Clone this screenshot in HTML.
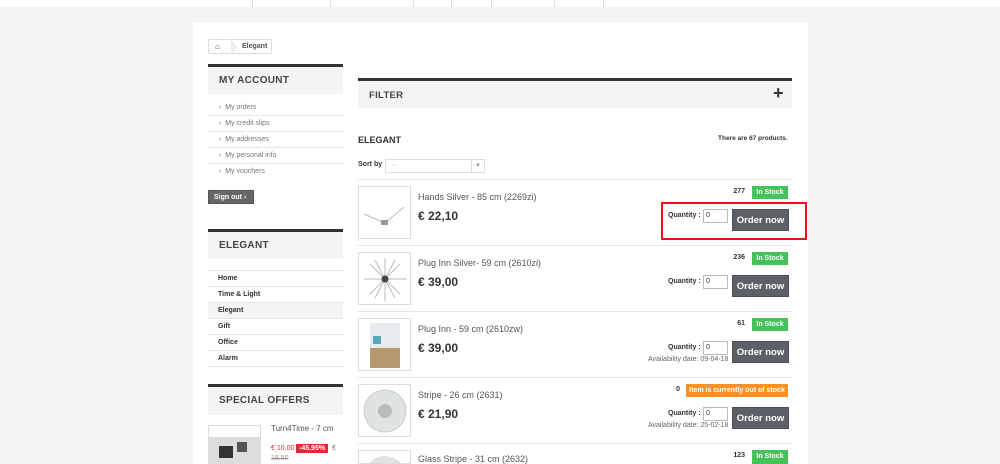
<!DOCTYPE html>
<html style="width:1000px;height:464px;overflow:hidden"><head><meta charset="utf-8"><style>
*{margin:0;padding:0;box-sizing:border-box}
body{width:1000px;height:464px;overflow:hidden;background:#f4f4f4;font-family:"Liberation Sans",Arial,sans-serif;position:relative;color:#333}
.a{position:absolute}
.top{left:0;top:0;width:1000px;height:7px;background:#fff}
.sep{top:0;width:1px;height:7px;background:#ddd}
.main{left:193px;top:22px;width:615px;height:442px;background:#fff}
.bc{left:208px;top:39px;width:64px;height:15px;border:1px solid #ddd;border-radius:2px;font-size:7px;font-weight:bold;color:#555}
.bh{background:#f4f4f4;border-top:3px solid #333;font-weight:bold;color:#444;letter-spacing:.3px}
.lnk{font-size:7px;color:#777;border-bottom:1px solid #e6e6e6;width:135px;height:16px;line-height:15px;padding-left:11px}
.cat{font-size:7px;color:#333;font-weight:bold;border-bottom:1px solid #e6e6e6;width:135px;height:16px;line-height:16px;padding-left:10px}
.row{left:358px;width:434px;height:1px;background:#e6e6e6}
.th{width:53px;height:53px;border:1px solid #ddd;background:#fff;overflow:hidden}
.nm{font-size:9px;color:#555}
.pr{font-size:12px;font-weight:bold;color:#333}
.num{font-size:7px;font-weight:bold;color:#333;text-align:right;width:30px}
.ins{background:#46c25a;color:#fff;font-size:7px;font-weight:bold;height:13px;line-height:13px;text-align:center;width:36px}
.q{font-size:7px;font-weight:bold;color:#333}
.inp{width:25px;height:14px;border:1px solid #bbb;font-size:7px;padding-left:2px;line-height:12px}
.btn{width:57px;height:22px;background:#5c6168;color:#fff;font-size:9.5px;font-weight:bold;text-align:center;line-height:22px;border:1px solid #4a4e55}
.av{font-size:7px;color:#666}
</style></head><body>
<div class="a top"></div>
<div class="a sep" style="left:252px"></div><div class="a sep" style="left:330px"></div><div class="a sep" style="left:413px"></div><div class="a sep" style="left:451px"></div><div class="a sep" style="left:491px"></div><div class="a sep" style="left:554px"></div><div class="a sep" style="left:603px"></div>
<div class="a main"></div>
<div class="a bc"><span class="a" style="left:6px;top:2px;font-size:8px">&#8962;</span><span class="a" style="left:22px;top:-1px;width:0;height:0;border-top:8px solid transparent;border-bottom:8px solid transparent;border-left:6px solid #eee"></span><span class="a" style="left:33px;top:3px">Elegant</span></div>

<div class="a bh" style="left:208px;top:64px;width:135px;height:30px;font-size:10px;padding:8px 0 0 11px">MY ACCOUNT</div>
<div class="a" style="left:208px;top:100px">
<div class="lnk">›&nbsp;&nbsp;My orders</div><div class="lnk">›&nbsp;&nbsp;My credit slips</div><div class="lnk">›&nbsp;&nbsp;My addresses</div><div class="lnk">›&nbsp;&nbsp;My personal info</div><div class="lnk" style="border:0">›&nbsp;&nbsp;My vouchers</div></div>
<div class="a" style="left:208px;top:190px;width:46px;height:14px;background:#666;color:#fff;font-size:7px;font-weight:bold;line-height:14px;padding-left:5px;border:1px solid #555">Sign out ›</div>

<div class="a bh" style="left:208px;top:229px;width:135px;height:30px;font-size:10px;padding:8px 0 0 11px">ELEGANT</div>
<div class="a" style="left:208px;top:270px;border-top:1px solid #e6e6e6">
<div class="cat">Home</div><div class="cat">Time &amp; Light</div><div class="cat" style="background:#f4f4f4">Elegant</div><div class="cat">Gift</div><div class="cat">Office</div><div class="cat">Alarm</div></div>

<div class="a bh" style="left:208px;top:384px;width:135px;height:31px;font-size:10px;padding:8px 0 0 11px">SPECIAL OFFERS</div>
<div class="a th" style="left:208px;top:425px;width:53px;height:39px;background:linear-gradient(#fff 0 30%,#ddd 30%)"><div class="a" style="left:10px;top:20px;width:14px;height:12px;background:#333"></div><div class="a" style="left:28px;top:16px;width:10px;height:10px;background:#555"></div></div>
<div class="a nm" style="left:271px;top:424px;font-size:8px">Turn4Time - 7 cm</div>
<div class="a" style="left:271px;top:445px;font-size:7px;color:#e02b36">€ 10,00</div>
<div class="a" style="left:296px;top:444px;background:#e02b36;color:#fff;font-size:7px;font-weight:bold;padding:1px 3px">-45.95%</div>
<div class="a" style="left:332px;top:445px;font-size:7px;color:#777">€</div>
<div class="a" style="left:271px;top:455px;font-size:7px;color:#999;text-decoration:line-through">18,50</div>

<div class="a bh" style="left:358px;top:78px;width:434px;height:30px;font-size:9.5px;padding:9px 0 0 11px">FILTER</div>
<div class="a" style="left:773px;top:83px;font-size:18px;font-weight:bold;color:#333">+</div>
<div class="a" style="left:358px;top:135px;font-size:9px;font-weight:bold;color:#333">ELEGANT</div>
<div class="a" style="left:718px;top:135px;font-size:6.5px;font-weight:bold;color:#333">There are 67 products.</div>
<div class="a" style="left:358px;top:161px;font-size:7px;font-weight:bold">Sort by</div>
<div class="a" style="left:385px;top:159px;width:100px;height:14px;border:1px solid #ddd;font-size:7px;color:#bbb;padding-left:5px;line-height:12px">--<span class="a" style="right:0;top:0;width:13px;height:12px;border-left:1px solid #ddd;color:#999;text-align:center;font-size:6px">▼</span></div>

<div class="a row" style="top:179px"></div>
<div class="a row" style="top:245px"></div>
<div class="a row" style="top:311px"></div>
<div class="a row" style="top:377px"></div>
<div class="a row" style="top:443px"></div>

<div class="a th" style="left:358px;top:186px"><svg width="53" height="53"><line x1="5" y1="27" x2="26" y2="36" stroke="#bbb"/><line x1="26" y1="36" x2="45" y2="20" stroke="#bbb"/><rect x="22" y="33" width="7" height="5" fill="#999"/></svg></div>
<div class="a nm" style="left:418px;top:192px">Hands Silver - 85 cm (2269zi)</div>
<div class="a pr" style="left:418px;top:209px">€ 22,10</div>
<div class="a num" style="left:715px;top:188px">277</div><div class="a ins" style="left:752px;top:186px">In Stock</div>
<div class="a q" style="left:668px;top:212px">Quantity :</div><div class="a inp" style="left:703px;top:209px">0</div>
<div class="a btn" style="left:732px;top:209px">Order now</div>
<div class="a" style="left:661px;top:202px;width:146px;height:38px;border:2px solid #e8101a"></div>

<div class="a th" style="left:358px;top:252px"><svg width="53" height="53"><g stroke="#bbb"><line x1="26" y1="5" x2="26" y2="48"/><line x1="5" y1="26" x2="48" y2="26"/><line x1="11" y1="11" x2="41" y2="41"/><line x1="41" y1="11" x2="11" y2="41"/><line x1="16" y1="7" x2="36" y2="45"/><line x1="36" y1="7" x2="16" y2="45"/></g><circle cx="26" cy="26" r="3.5" fill="#444"/></svg></div>
<div class="a nm" style="left:418px;top:258px">Plug Inn Silver- 59 cm (2610zi)</div>
<div class="a pr" style="left:418px;top:275px">€ 39,00</div>
<div class="a num" style="left:715px;top:254px">236</div><div class="a ins" style="left:752px;top:252px">In Stock</div>
<div class="a q" style="left:668px;top:278px">Quantity :</div><div class="a inp" style="left:703px;top:275px">0</div>
<div class="a btn" style="left:732px;top:275px">Order now</div>

<div class="a th" style="left:358px;top:318px"><div class="a" style="left:11px;top:4px;width:30px;height:45px;background:linear-gradient(#e8ecef 55%,#b59870 55%)"></div><div class="a" style="left:14px;top:17px;width:8px;height:8px;background:#5ab"></div></div>
<div class="a nm" style="left:418px;top:324px">Plug Inn - 59 cm (2610zw)</div>
<div class="a pr" style="left:418px;top:341px">€ 39,00</div>
<div class="a num" style="left:715px;top:320px">61</div><div class="a ins" style="left:752px;top:318px">In Stock</div>
<div class="a q" style="left:668px;top:344px">Quantity :</div><div class="a inp" style="left:703px;top:341px">0</div>
<div class="a av" style="left:648px;top:356px">Availability date: 09-04-18</div>
<div class="a btn" style="left:732px;top:341px">Order now</div>

<div class="a th" style="left:358px;top:384px"><svg width="53" height="53"><circle cx="26" cy="26" r="21" fill="#dfe3e2" stroke="#ccc"/><circle cx="26" cy="26" r="7" fill="#b8bcbb"/></svg></div>
<div class="a nm" style="left:418px;top:390px">Stripe - 26 cm (2631)</div>
<div class="a pr" style="left:418px;top:407px">€ 21,90</div>
<div class="a num" style="left:650px;top:386px">0</div><div class="a ins" style="left:686px;top:384px;width:102px;background:#fe9126">Item is currently out of stock</div>
<div class="a q" style="left:668px;top:410px">Quantity :</div><div class="a inp" style="left:703px;top:407px">0</div>
<div class="a av" style="left:648px;top:422px">Availability date: 25-02-18</div>
<div class="a btn" style="left:732px;top:407px">Order now</div>

<div class="a th" style="left:358px;top:450px;height:14px"><svg width="53" height="14"><circle cx="26" cy="26" r="21" fill="#dfe3e2"/></svg></div>
<div class="a nm" style="left:418px;top:454px">Glass Stripe - 31 cm (2632)</div>
<div class="a num" style="left:715px;top:452px">123</div><div class="a ins" style="left:752px;top:450px;height:14px">In Stock</div>
</body></html>
